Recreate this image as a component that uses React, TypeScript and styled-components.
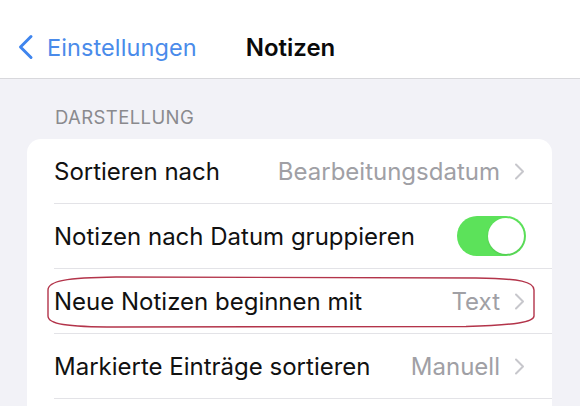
import styled, { createGlobalStyle } from "styled-components";

const GlobalStyle = createGlobalStyle`
  html, body {
    margin: 0;
    padding: 0;
    background: #f2f2f7;
  }
  body {
    font-family: Inter, "Noto Sans", "Liberation Sans", sans-serif;
    -webkit-font-smoothing: antialiased;
  }
`;

type Row = {
  label: string;
  value?: string;
  toggle?: boolean;
  marked?: boolean;
};

const rows: Row[] = [
  { label: "Sortieren nach", value: "Bearbeitungsdatum" },
  { label: "Notizen nach Datum gruppieren", toggle: true },
  { label: "Neue Notizen beginnen mit", value: "Text", marked: true },
  { label: "Markierte Einträge sortieren", value: "Manuell" },
];

const App = () => {
  return (
    <Page>
      <GlobalStyle />
      <NavBar>
        <BackButton>
          <svg width="17" height="26" viewBox="0 0 17 26" fill="none">
            <path
              d="M14 2.5 L3.5 13 L14 23.5"
              stroke="#3f85ee"
              strokeWidth="3"
              strokeLinecap="round"
              strokeLinejoin="round"
            />
          </svg>
          <span>Einstellungen</span>
        </BackButton>
        <Title>Notizen</Title>
        <span />
      </NavBar>

      <SectionHeader>DARSTELLUNG</SectionHeader>

      <Card>
        {rows.map((row) => (
          <RowItem key={row.label}>
            <Label>{row.label}</Label>
            {row.toggle ? (
              <Toggle $on>
                <Knob />
              </Toggle>
            ) : (
              <Value>
                {row.value}
                <svg width="11" height="17" viewBox="0 0 11 17" fill="none">
                  <path
                    d="M2 1.5 L9 8.5 L2 15.5"
                    stroke="#c7c7cc"
                    strokeWidth="2"
                    strokeLinecap="round"
                    strokeLinejoin="round"
                  />
                </svg>
              </Value>
            )}
            {row.marked && (
              <Marker viewBox="0 0 490 52" preserveAspectRatio="none">
                <path
                  d="M2 14 C2 5, 20 1.5, 70 1 L430 2 C475 2.5, 488 6, 488 14 L488 40 C488 46, 470 49, 420 50.5 L70 51 C20 51, 2 48, 2 40 Z"
                  fill="none"
                  stroke="#b3344a"
                  strokeWidth="1.4"
                />
              </Marker>
            )}
          </RowItem>
        ))}
        <RowItem />
      </Card>
    </Page>
  );
};

export default App;

const Page = styled.div`
  width: 580px;
  height: 406px;
  overflow: hidden;
  background: #f2f2f7;
`;

const NavBar = styled.div`
  display: grid;
  grid-template-columns: 1fr auto 1fr;
  align-items: center;
  height: 79px;
  padding: 16px 16px 0 17px;
  box-sizing: border-box;
  background: #ffffff;
  border-bottom: 1px solid #d8d8dc;
`;

const BackButton = styled.div`
  display: flex;
  align-items: center;
  gap: 13px;
  color: #4a8bea;
  font-size: 23.5px;
  font-weight: 400;
  letter-spacing: 0.1px;
`;

const Title = styled.div`
  font-size: 24px;
  font-weight: 600;
  color: #0a0a0a;
`;

const SectionHeader = styled.div`
  padding: 27px 0 0 55px;
  height: 33px;
  font-size: 18.5px;
  font-weight: 400;
  color: #8a8a8e;
  letter-spacing: 0.4px;
`;

const Card = styled.div`
  margin: 0 28px 0 27px;
  background: #ffffff;
  border-radius: 14px;
`;

const RowItem = styled.div`
  position: relative;
  display: flex;
  align-items: center;
  justify-content: space-between;
  height: 65px;
  margin-left: 27px;
  padding-right: 26px;
  border-bottom: 1px solid #e3e3e7;
  box-sizing: border-box;
`;

const Label = styled.span`
  font-size: 24px;
  color: #111111;
`;

const Value = styled.span`
  display: flex;
  align-items: center;
  gap: 14px;
  margin-right: 1px;
  font-size: 24px;
  color: #a0a0a5;
`;

const Toggle = styled.div<{ $on?: boolean }>`
  display: flex;
  align-items: center;
  justify-content: ${(p) => (p.$on ? "flex-end" : "flex-start")};
  width: 69px;
  height: 40px;
  padding: 2px;
  box-sizing: border-box;
  border-radius: 20px;
  background: ${(p) => (p.$on ? "#5ce25a" : "#e9e9eb")};
`;

const Knob = styled.div`
  width: 36px;
  height: 36px;
  border-radius: 50%;
  background: #ffffff;
  box-shadow: 0 1px 2px rgba(0, 0, 0, 0.12);
`;

const Marker = styled.svg`
  position: absolute;
  left: -8px;
  top: 7px;
  width: 490px;
  height: 52px;
  pointer-events: none;
  overflow: visible;
`;
